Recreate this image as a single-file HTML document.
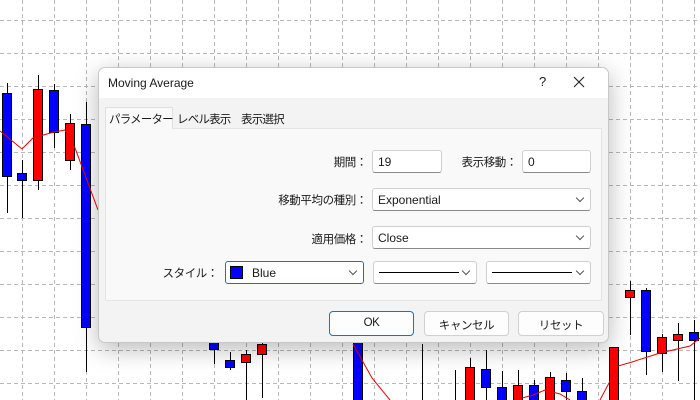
<!DOCTYPE html>
<html><head><meta charset="utf-8"><style>
*{margin:0;padding:0;box-sizing:border-box}
body{width:700px;height:400px;overflow:hidden;background:#fff;position:relative;font-family:"Liberation Sans","Noto Sans CJK JP",sans-serif;font-size:12px;color:#1a1a1a}
svg.bg{position:absolute;left:0;top:0}
.dlg{position:absolute;left:98px;top:67px;width:511px;height:276px;background:#f3f3f3;border:1px solid #c8c8c8;border-radius:7px;box-shadow:0 6px 24px rgba(0,0,0,.28);overflow:hidden}
.title{position:absolute;left:0;top:0;width:100%;height:30px;background:#fff}
.title .t{position:absolute;left:9px;top:8px;font-size:12px}
.q{position:absolute;left:440px;top:6px;font-size:13px}
.x{position:absolute;left:474px;top:8px}
.tab{position:absolute;top:41px;height:19px;font-size:11.5px;letter-spacing:-0.8px;padding-top:2px;white-space:nowrap}
.panel{position:absolute;left:6px;top:60px;width:497px;height:173px;background:#f9f9f9;border:1px solid #e5e5e5}
.lbl{position:absolute;font-size:11.5px;letter-spacing:-0.4px;white-space:nowrap;text-align:right}
.box{position:absolute;background:#fff;border:1px solid #d0d0d0;border-bottom-color:#8a8a8a;border-radius:3px;height:23px;font-size:12px;padding:4px 5px;white-space:nowrap}
.chev{position:absolute;right:7px;top:6px;width:6px;height:6px;border-right:1px solid #555;border-bottom:1px solid #555;transform:rotate(45deg)}
.btn{position:absolute;top:243px;height:25px;background:#fdfdfd;border:1px solid #d0d0d0;border-radius:4px;text-align:center;padding-top:5px;font-size:11.5px;letter-spacing:-0.4px;white-space:nowrap}
</style></head><body>
<svg class="bg" width="700" height="400">
<g stroke="#b8b8b8" stroke-dasharray="4,3" stroke-width="1">
<path d="M22.5 0V400M54.5 0V400M86.5 0V400M118.5 0V400M150.5 0V400M182.5 0V400M214.5 0V400M246.5 0V400M278.5 0V400M310.5 0V400M342.5 0V400M374.5 0V400M406.5 0V400M438.5 0V400M470.5 0V400M502.5 0V400M534.5 0V400M566.5 0V400M598.5 0V400M630.5 0V400M662.5 0V400M694.5 0V400"/>
<path d="M0 20.5H700M0 53.5H700M0 86.5H700M0 119.5H700M0 152.5H700M0 185.5H700M0 218.5H700M0 251.5H700M0 284.5H700M0 317.5H700M0 350.5H700M0 383.5H700"/>
</g>
<g stroke="#000" stroke-width="1">
<path d="M7.5 83V213M22.5 160V218M38.5 75V190M54.5 84V148M70.5 114V170M86.5 102V372"/>
<path d="M214.5 330V364M230.5 352V370M246.5 350V400M262.5 340V398M422.5 344V400M455.5 370V400M470.5 358V400M486.5 350V400M502.5 371V400M518.5 370V400M534.5 380V400M550.5 372V400M566.5 373V400M582.5 378V400"/>
<path d="M630.5 281V335M646.5 288V375M662.5 334V372M678.5 323V381M694.5 320V400"/>
</g>
<g stroke="#000" stroke-width="1">
<rect x="2.5" y="93.5" width="9" height="83" fill="#00f"/>
<rect x="17.5" y="173.5" width="9" height="7" fill="#00f"/>
<rect x="33.5" y="89.5" width="9" height="91" fill="#f00"/>
<rect x="49.5" y="90.5" width="9" height="42" fill="#00f"/>
<rect x="65.5" y="123.5" width="9" height="37" fill="#f00"/>
<rect x="81.5" y="124.5" width="9" height="203" fill="#00f"/>
<rect x="209.5" y="330.5" width="9" height="19" fill="#00f"/>
<rect x="225.5" y="360.5" width="9" height="7" fill="#00f"/>
<rect x="241.5" y="354.5" width="9" height="8" fill="#f00"/>
<rect x="257.5" y="344.5" width="9" height="10" fill="#f00"/>
<rect x="353.5" y="340.5" width="9" height="62" fill="#00f"/>
<rect x="465.5" y="367.5" width="9" height="35" fill="#f00"/>
<rect x="481.5" y="369.5" width="9" height="18" fill="#00f"/>
<rect x="497.5" y="387.5" width="9" height="15" fill="#00f"/>
<rect x="513.5" y="385.5" width="9" height="17" fill="#f00"/>
<rect x="529.5" y="385.5" width="9" height="17" fill="#00f"/>
<rect x="545.5" y="377.5" width="9" height="25" fill="#f00"/>
<rect x="561.5" y="380.5" width="9" height="11" fill="#00f"/>
<rect x="577.5" y="391.5" width="9" height="11" fill="#00f"/>
<rect x="609.5" y="347.5" width="9" height="55" fill="#f00"/>
<rect x="625.5" y="290.5" width="9" height="7" fill="#f00"/>
<rect x="641.5" y="290.5" width="9" height="61" fill="#00f"/>
<rect x="657.5" y="337.5" width="9" height="16" fill="#f00"/>
<rect x="673.5" y="334.5" width="9" height="6" fill="#f00"/>
<rect x="689.5" y="332.5" width="9" height="8" fill="#00f"/>
</g>
<g stroke="#e00" stroke-width="1" fill="none">
<path d="M0 131L22 149L33 138L54 132L65 130L75 148L98 210"/>
<path d="M353 344L372 378L390 400"/>
<path d="M515 400L533 395L545 390L560 394L570 400"/>
<path d="M600 400L618 366L632 362L660 353L690 346L700 338"/>
</g>
</svg>
<div class="dlg">
<div class="title"><span class="t">Moving Average</span><span class="q">?</span>
<svg class="x" width="12" height="12"><path d="M1 1L11 11M11 1L1 11" stroke="#222" stroke-width="1.1"/></svg></div>
<div class="tab" style="left:6px;width:68px;top:39px;height:22px;background:#f9f9f9;border:1px solid #e0e0e0;border-bottom:none;padding:3px 0 0 3px;z-index:2">パラメーター</div>
<div class="tab" style="left:78px">レベル表示</div>
<div class="tab" style="left:142px">表示選択</div>
<div class="panel">
<div class="lbl" style="right:234px;top:25px">期間：</div>
<div class="box" style="left:266px;top:21px;width:70px">19</div>
<div class="lbl" style="right:84px;top:25px">表示移動：</div>
<div class="box" style="left:416px;top:21px;width:69px">0</div>
<div class="lbl" style="right:234px;top:63px">移動平均の種別：</div>
<div class="box" style="left:266px;top:59px;width:219px">Exponential<span class="chev"></span></div>
<div class="lbl" style="right:234px;top:102px">適用価格：</div>
<div class="box" style="left:266px;top:97px;width:219px">Close<span class="chev"></span></div>
<div class="lbl" style="right:383px;top:136px">スタイル：</div>
<div class="box" style="left:119px;top:132px;width:139px;border:1px solid #1a73c0;padding-left:26px"><span style="position:absolute;left:4px;top:4px;width:13px;height:13px;background:#00f;border:1px solid #000"></span>Blue<span class="chev"></span></div>
<div class="box" style="left:267px;top:132px;width:104px"><span style="position:absolute;left:5px;top:10px;width:80px;border-top:1px solid #000"></span><span class="chev"></span></div>
<div class="box" style="left:380px;top:132px;width:105px"><span style="position:absolute;left:5px;top:10px;width:80px;border-top:1px solid #000"></span><span class="chev"></span></div>
</div>
<div class="btn" style="left:230px;width:85px;border-color:#1a73c0">OK</div>
<div class="btn" style="left:325px;width:85px">キャンセル</div>
<div class="btn" style="left:419px;width:86px">リセット</div>
</div>
</body></html>
